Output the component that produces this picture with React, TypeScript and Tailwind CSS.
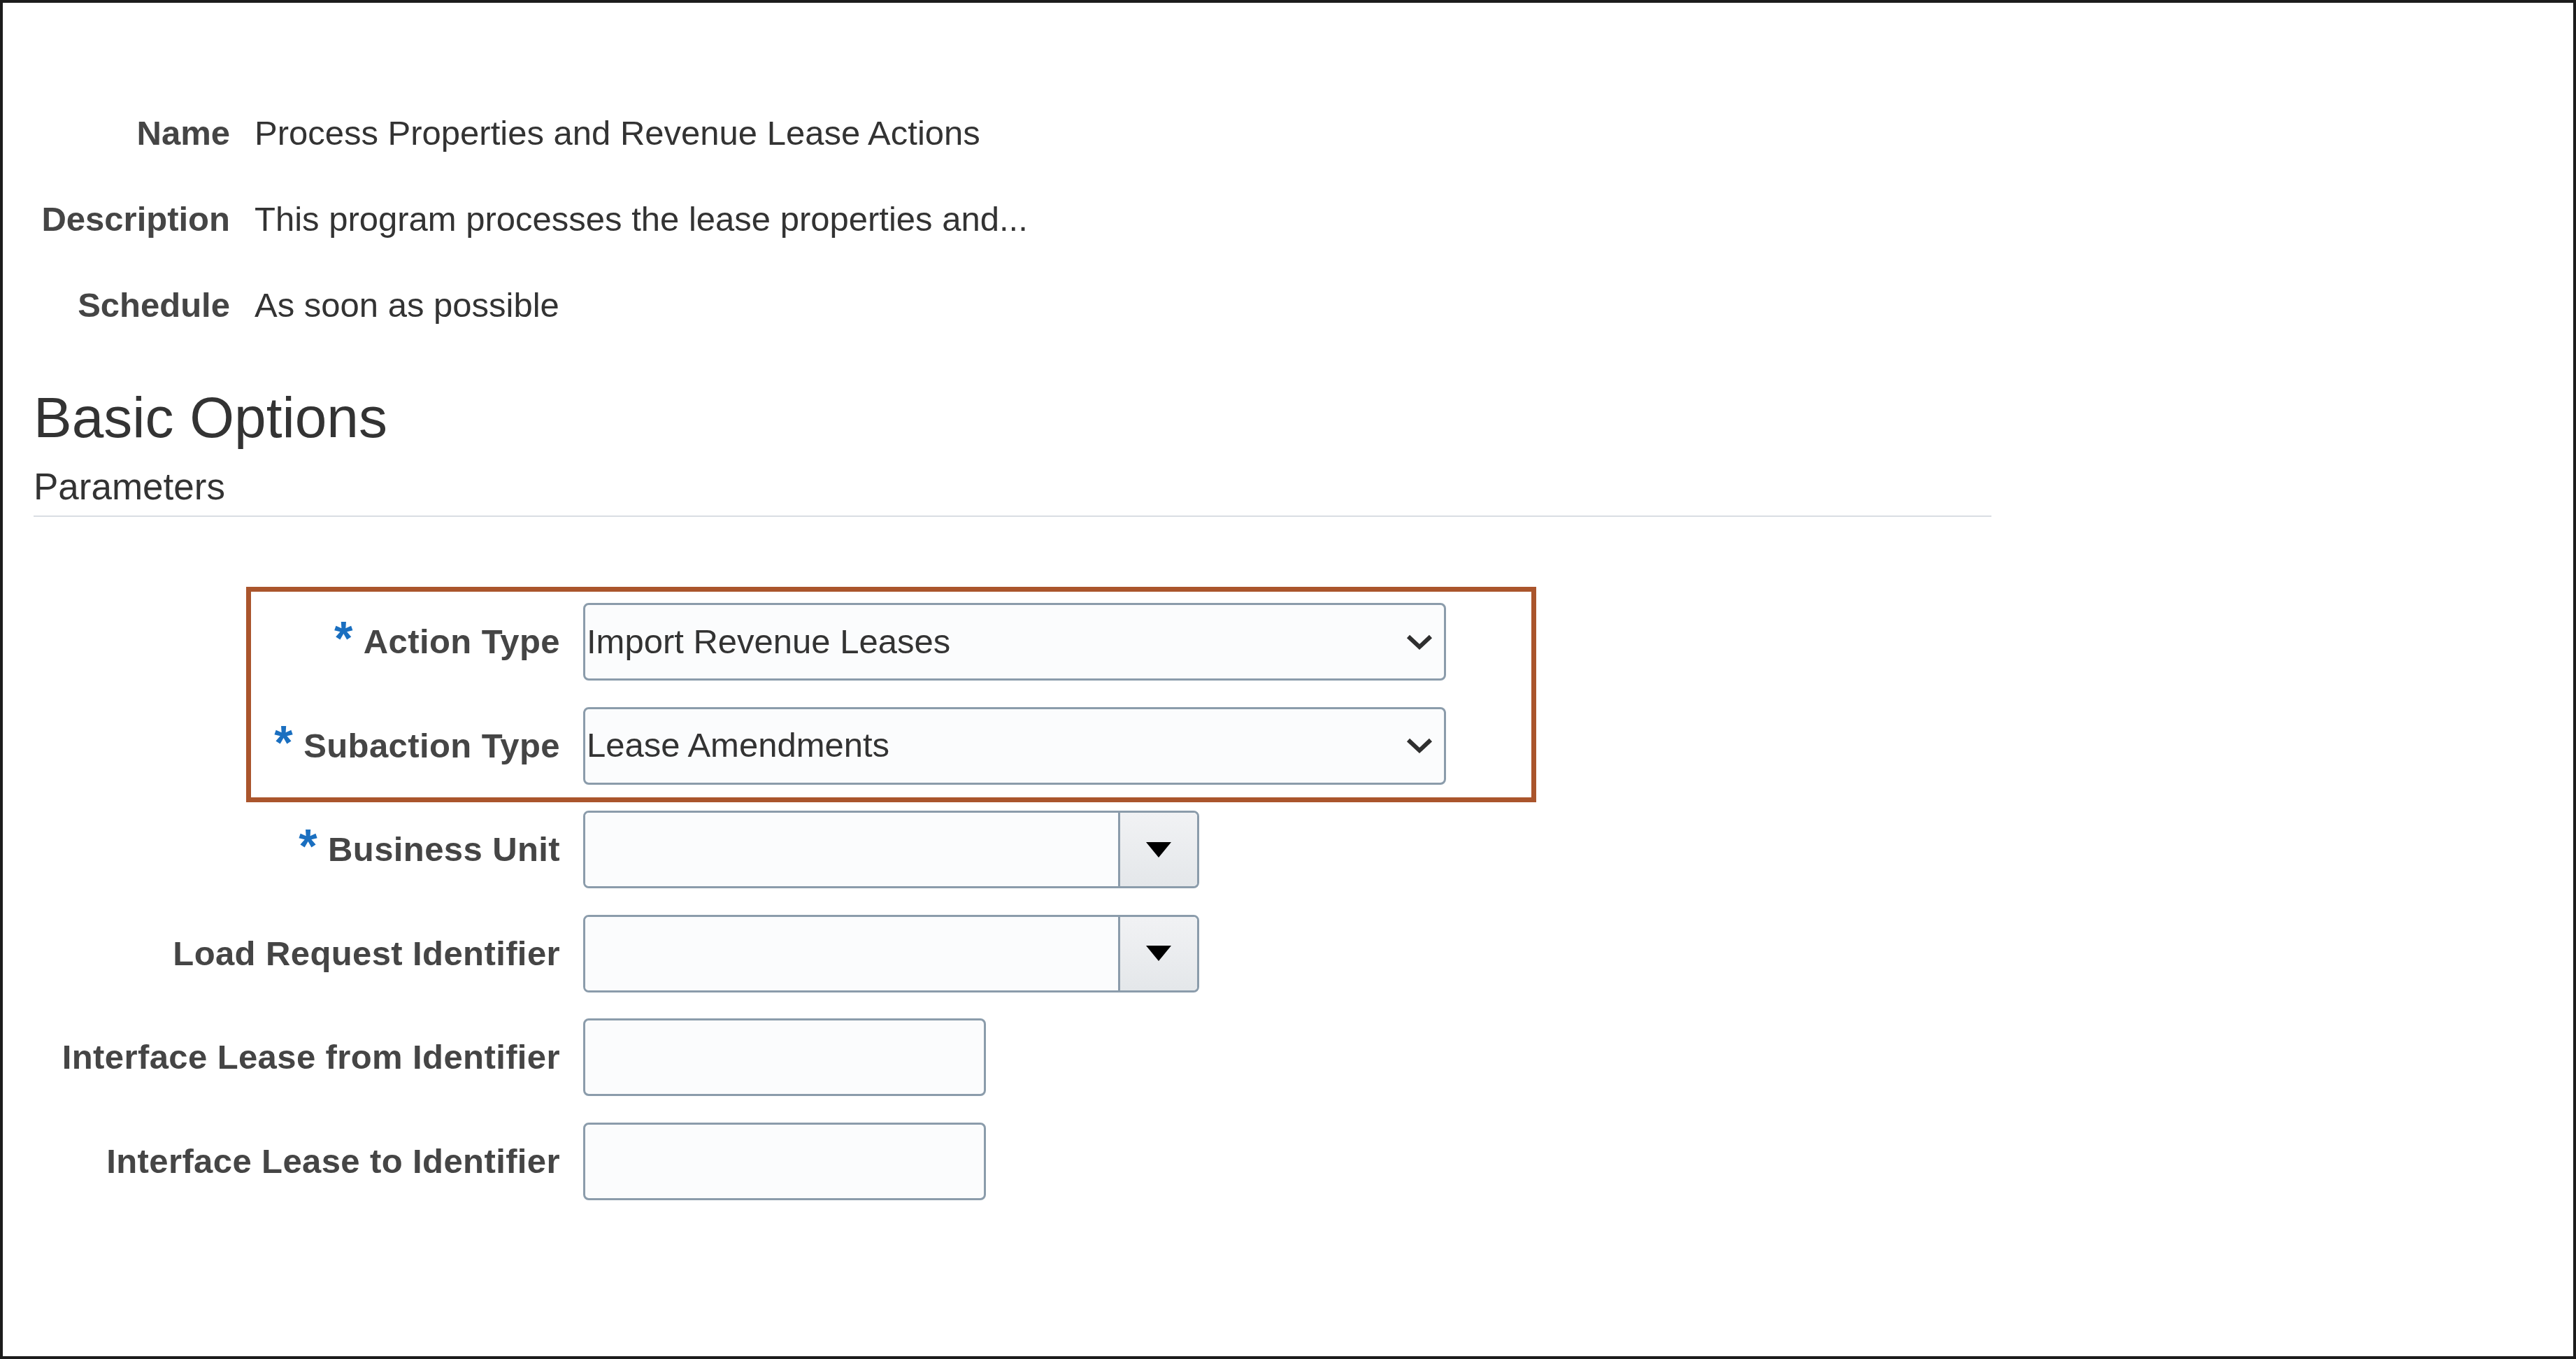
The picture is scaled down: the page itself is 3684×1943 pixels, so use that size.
import React from 'react';

interface Field {
  label: string;
  required?: boolean;
  kind: 'select' | 'combo' | 'text';
  value?: string;
}

const summary = [
  { label: 'Name', value: 'Process Properties and Revenue Lease Actions' },
  { label: 'Description', value: 'This program processes the lease properties and...' },
  { label: 'Schedule', value: 'As soon as possible' },
];

const fields: Field[] = [
  { label: 'Action Type', required: true, kind: 'select', value: 'Import Revenue Leases' },
  { label: 'Subaction Type', required: true, kind: 'select', value: 'Lease Amendments' },
  { label: 'Business Unit', required: true, kind: 'combo' },
  { label: 'Load Request Identifier', kind: 'combo' },
  { label: 'Interface Lease from Identifier', kind: 'text' },
  { label: 'Interface Lease to Identifier', kind: 'text' },
];

const Chevron = () => (
  <svg width="38" height="26" viewBox="0 0 38 26">
    <path d="M3 5 L19 20 L35 5" stroke="#2f2f2f" strokeWidth="6" fill="none" />
  </svg>
);

const Control: React.FC<{ field: Field }> = ({ field }) => {
  if (field.kind === 'select') {
    return (
      <div className="w-[1234px] h-[111px] border-[3px] border-[#8b9cab] rounded-[8px] bg-[#fbfcfd] flex items-center justify-between pl-[2px] pr-[16px]">
        <span className="text-[49px] text-[#333333]">{field.value}</span>
        <Chevron />
      </div>
    );
  }
  if (field.kind === 'combo') {
    return (
      <div className="w-[881px] h-[111px] border-[3px] border-[#8b9cab] rounded-[8px] overflow-hidden flex">
        <div className="flex-1 bg-[#fbfcfd]" />
        <div className="w-[113px] border-l-[3px] border-[#8b9cab] bg-gradient-to-b from-[#f1f2f4] to-[#e4e7ea] flex items-center justify-center">
          <svg width="38" height="24" viewBox="0 0 38 24">
            <path d="M1 1 H37 L19 23 Z" fill="#000000" />
          </svg>
        </div>
      </div>
    );
  }
  return <div className="w-[576px] h-[111px] border-[3px] border-[#8b9cab] rounded-[8px] bg-[#fbfcfd]" />;
};

export default function App() {
  return (
    <div className="w-[3684px] h-[1943px] bg-white border-[4px] border-[#1c1c1c] font-['Liberation_Sans',Arial,sans-serif] text-[#333333] overflow-hidden">
      <div className="pt-[125px]">
        {summary.map((row) => (
          <div key={row.label} className="flex items-center h-[123px]">
            <div className="w-[325px] text-right text-[49px] font-bold text-[#454545] leading-none">{row.label}</div>
            <div className="ml-[35px] text-[49px] leading-none">{row.value}</div>
          </div>
        ))}
      </div>

      <div className="ml-[44px] w-[2800px] mt-[58px]">
        <h1 className="text-[82px] leading-none font-normal">Basic Options</h1>
        <h2 className="mt-[31px] text-[53px] leading-none font-normal pb-[15px] border-b-[2px] border-[#d9dee3]">Parameters</h2>
      </div>

      <div className="relative mt-[123px] flex flex-col gap-[37.6px]">
        {/* highlight around the first two parameters */}
        <div className="absolute left-[348px] top-[-23px] w-[1845px] h-[308px] border-[7px] border-[#aa552c]" />
        {fields.map((f) => (
          <div key={f.label} className="flex items-center">
            <div className="w-[797px] text-right text-[49px] font-bold text-[#454545] leading-none tracking-[0.4px]">
              {f.required && (
                <span className="text-[#1a6fc0] text-[68px] leading-[0] align-[-2px] mr-[15px]">*</span>
              )}
              {f.label}
            </div>
            <div className="ml-[33px]">
              <Control field={f} />
            </div>
          </div>
        ))}
      </div>
    </div>
  );
}
